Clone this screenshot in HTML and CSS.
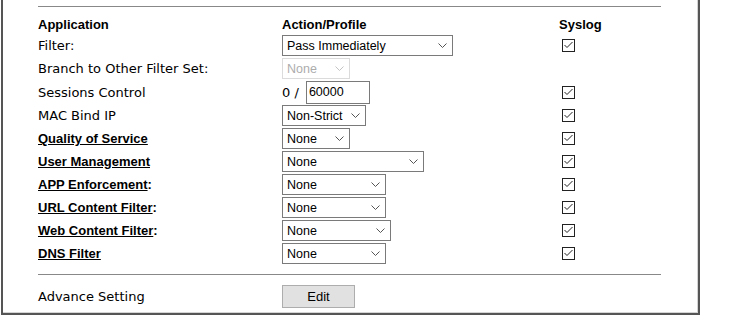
FILE: index.html
```html
<!DOCTYPE html>
<html lang="en">

<head>
    <meta charset="UTF-8">
    <title>Filter Rule</title>
    <link rel="stylesheet" href="styles.css">
</head>

<body>
    <div class="frame">
        <div class="rule"></div>

        <div class="row head">
            <div>Application</div>
            <div>Action/Profile</div>
            <div>Syslog</div>
        </div>

        <div class="row">
            <div class="label">Filter:</div>
            <div><select class="sel" style="width: 171px;"><option>Pass Immediately</option></select></div>
            <div><input type="checkbox" class="chk" checked></div>
        </div>

        <div class="row">
            <div class="label">Branch to Other Filter Set:</div>
            <div><select class="sel" style="width: 68px;" disabled><option>None</option></select></div>
            <div></div>
        </div>

        <div class="row tall">
            <div class="label">Sessions Control</div>
            <div class="sessions">0 / <input type="text" class="num" value="60000"></div>
            <div><input type="checkbox" class="chk" checked></div>
        </div>

        <div class="row">
            <div class="label">MAC Bind IP</div>
            <div><select class="sel" style="width: 84px;"><option>Non-Strict</option></select></div>
            <div><input type="checkbox" class="chk" checked></div>
        </div>

        <div class="row">
            <div class="link"><a>Quality of Service</a></div>
            <div><select class="sel" style="width: 68px;"><option>None</option></select></div>
            <div><input type="checkbox" class="chk" checked></div>
        </div>

        <div class="row">
            <div class="link"><a>User Management</a></div>
            <div><select class="sel" style="width: 142px;"><option>None</option></select></div>
            <div><input type="checkbox" class="chk" checked></div>
        </div>

        <div class="row">
            <div class="link"><a>APP Enforcement</a>:</div>
            <div><select class="sel" style="width: 104px;"><option>None</option></select></div>
            <div><input type="checkbox" class="chk" checked></div>
        </div>

        <div class="row">
            <div class="link"><a>URL Content Filter</a>:</div>
            <div><select class="sel" style="width: 104px;"><option>None</option></select></div>
            <div><input type="checkbox" class="chk" checked></div>
        </div>

        <div class="row">
            <div class="link"><a>Web Content Filter</a>:</div>
            <div><select class="sel" style="width: 109px;"><option>None</option></select></div>
            <div><input type="checkbox" class="chk" checked></div>
        </div>

        <div class="row">
            <div class="link"><a>DNS Filter</a></div>
            <div><select class="sel" style="width: 104px;"><option>None</option></select></div>
            <div><input type="checkbox" class="chk" checked></div>
        </div>

        <div class="rule bottom"></div>

        <div class="row advance">
            <div class="label">Advance Setting</div>
            <div><button class="btn">Edit</button></div>
            <div></div>
        </div>
    </div>
</body>

</html>
```

FILE: styles.css
```css
body {
    margin: 0;
    padding: 0;
    background: #ffffff;
    font-family: 'Liberation Sans', Arial, sans-serif;
    font-size: 13px;
    color: #000;
}

.frame {
    margin-left: 1px;
    width: 699px;
    box-sizing: border-box;
    padding: 6px 0 5px 35px;
    border-left: 2px solid #555;
    border-right: 2px solid #555;
    border-bottom: 2px solid #555;
    box-shadow: inset -1px -1px 0 #d4d4d4;
}

.rule {
    width: 623px;
    height: 1px;
    background-color: #888;
    margin-bottom: 7px;
}

.rule.bottom {
    margin-top: 9px;
    margin-bottom: 10px;
}

.row {
    display: grid;
    grid-template-columns: 244px 277px 1fr;
    align-items: center;
    height: 23px;
}

.row.head {
    height: 20px;
    font-weight: bold;
}

.row.tall {
    height: 24px;
}

.label {
    font-family: 'DejaVu Sans', Verdana, sans-serif;
    font-size: 13px;
}

.link {
    font-weight: bold;
}

.link a {
    text-decoration: underline;
    color: #000;
}

.sel {
    appearance: none;
    -webkit-appearance: none;
    height: 21px;
    box-sizing: border-box;
    border: 1px solid #7a7a7a;
    border-radius: 0;
    padding: 0 0 0 4px;
    margin: 0;
    font-family: 'Liberation Sans', Arial, sans-serif;
    font-size: 12.5px;
    color: #000;
    background: #fff url("data:image/svg+xml,%3Csvg xmlns='http://www.w3.org/2000/svg' width='9' height='5' viewBox='0 0 9 5'%3E%3Cpath d='M0.5 0.5 L4.5 4.5 L8.5 0.5' fill='none' stroke='%23555' stroke-width='1'/%3E%3C/svg%3E") no-repeat right 5px center;
    display: block;
}

.sel:disabled {
    border-color: #cccccc;
    color: #8a8a8a;
    background-image: url("data:image/svg+xml,%3Csvg xmlns='http://www.w3.org/2000/svg' width='9' height='5' viewBox='0 0 9 5'%3E%3Cpath d='M0.5 0.5 L4.5 4.5 L8.5 0.5' fill='none' stroke='%23aaa' stroke-width='1'/%3E%3C/svg%3E");
}

.sessions {
    display: flex;
    align-items: center;
    font-family: 'DejaVu Sans', Verdana, sans-serif;
    font-size: 13px;
    white-space: pre;
}

.num {
    width: 64px;
    height: 23px;
    box-sizing: border-box;
    margin: 0 0 0 3px;
    padding: 0 0 0 2px;
    border: 1px solid #7a7a7a;
    border-radius: 0;
    font-family: 'Liberation Sans', Arial, sans-serif;
    font-size: 12.5px;
    outline: none;
}

.chk {
    appearance: none;
    -webkit-appearance: none;
    width: 13px;
    height: 13px;
    margin: 0 0 0 3px;
    display: block;
    border: 1px solid #222;
    border-radius: 0;
    background: #fff url("data:image/svg+xml,%3Csvg xmlns='http://www.w3.org/2000/svg' width='11' height='11' viewBox='0 0 11 11'%3E%3Cpath d='M1.5 5 L4 7.5 L9.5 2' fill='none' stroke='%23222' stroke-width='1'/%3E%3C/svg%3E") no-repeat center;
}

.row.advance {
    height: 23px;
}

.btn {
    width: 73px;
    height: 23px;
    box-sizing: border-box;
    margin: 0;
    border: 1px solid #adadad;
    border-radius: 0;
    background-color: #e1e1e1;
    font-family: 'Liberation Sans', Arial, sans-serif;
    font-size: 13px;
    color: #000;
}
```
